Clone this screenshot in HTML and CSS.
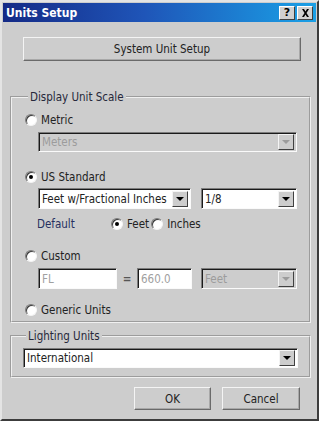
FILE: index.html
```html
<!DOCTYPE html>
<html lang="en">
<head>
    <meta charset="UTF-8">
    <title>Units Setup</title>
    <link rel="stylesheet" href="styles.css">
</head>
<body>
    <div class="window">
        <div class="titlebar">
            <span class="title">Units Setup</span>
            <div class="caption-buttons">
                <span class="cap-btn">?</span>
                <span class="cap-btn cap-close">
                    <svg width="9" height="8" viewBox="0 0 9 8"><path d="M1 0h2l1.5 2.5L6 0h2L5.5 4 8 8H6L4.5 5.5 3 8H1l2.5-4z" fill="#000"/></svg>
                </span>
            </div>
        </div>

        <div class="content">
            <button class="btn btn-wide">System Unit Setup</button>

            <fieldset class="group group-scale">
                <legend>Display Unit Scale</legend>

                <label class="row row-metric"><span class="radio"></span>Metric</label>
                <div class="combo combo-meters disabled"><span class="value">Meters</span><span class="arrow"></span></div>

                <label class="row row-us"><span class="radio checked"></span>US Standard</label>
                <div class="field-row field-row-us">
                    <div class="combo combo-feet"><span class="value">Feet w/Fractional Inches</span><span class="arrow"></span></div>
                    <div class="combo combo-frac"><span class="value">1/8</span><span class="arrow"></span></div>
                </div>
                <div class="row row-default">
                    <span class="default-label">Default</span>
                    <label class="opt opt-feet"><span class="radio checked"></span>Feet</label>
                    <label class="opt opt-inches"><span class="radio"></span>Inches</label>
                </div>

                <label class="row row-custom"><span class="radio"></span>Custom</label>
                <div class="field-row field-row-custom">
                    <div class="edit edit-fl">FL</div>
                    <span class="equals">=</span>
                    <div class="edit edit-num">660.0</div>
                    <div class="combo combo-unit disabled"><span class="value">Feet</span><span class="arrow"></span></div>
                </div>

                <label class="row row-generic"><span class="radio"></span>Generic Units</label>
            </fieldset>

            <fieldset class="group group-light">
                <legend>Lighting Units</legend>
                <div class="combo combo-light"><span class="value">International</span><span class="arrow"></span></div>
            </fieldset>

            <div class="actions">
                <button class="btn btn-ok">OK</button>
                <button class="btn btn-cancel">Cancel</button>
            </div>
        </div>
    </div>
</body>
</html>
```
FILE: styles.css
```css
body {
    margin: 0;
    background: #cdcdcd;
    font-family: "DejaVu Sans Condensed", "DejaVu Sans", sans-serif;
    font-size: 11.5px;
    color: #222;
}
.window {
    width: 319px;
    height: 421px;
    box-sizing: border-box;
    background: #cdcdcd;
    border: 2px solid;
    border-color: #e4e4e4 #3c3c3c #3c3c3c #e4e4e4;
    padding: 1px;
}
.titlebar {
    height: 19px;
    display: flex;
    align-items: center;
    justify-content: space-between;
    padding: 0 3px 0 3px;
    background: linear-gradient(to right, #142a86 0%, #1f55b8 45%, #1aa0e6 100%);
}
.title {
    color: #fff;
    font-weight: bold;
    font-size: 12px;
}
.caption-buttons {
    display: flex;
    gap: 2px;
}
.cap-btn {
    width: 16px;
    height: 14px;
    box-sizing: border-box;
    display: flex;
    align-items: center;
    justify-content: center;
    background: #d0d0d0;
    border: 1px solid;
    border-color: #fff #404040 #404040 #fff;
    font-family: "DejaVu Sans", sans-serif;
    font-weight: bold;
    font-size: 11px;
    color: #000;
}
.content {
    padding: 0 5px 0 7px;
}
.btn {
    display: block;
    box-sizing: border-box;
    background: #cdcdcd;
    border: 1px solid;
    border-color: #f4f4f4 #6a6a6a #6a6a6a #f4f4f4;
    box-shadow: inset -1px -1px #a8a8a8;
    font-family: inherit;
    font-size: 11.5px;
    color: #222;
    padding: 0;
}
.btn-wide {
    margin: 15px 10px 0 13px;
    width: 278px;
    height: 24px;
}
.group {
    margin: 0;
    border: 2px groove #f0f0f0;
    padding: 0 12px 0 13px;
}
.group legend {
    padding: 0 2px;
    margin-left: 3px;
    line-height: 14px;
    color: #26283a;
}
.group-scale {
    margin-top: 29px;
    height: 233px;
    box-sizing: border-box;
}
.row {
    display: flex;
    align-items: center;
    height: 16px;
}
.radio {
    width: 12px;
    height: 12px;
    box-sizing: border-box;
    border-radius: 50%;
    background: #fff;
    border: 1px solid;
    border-color: #7a7a7a #f4f4f4 #f4f4f4 #7a7a7a;
    box-shadow: inset 1px 1px #3a3a3a;
    margin-right: 4px;
    flex: none;
    position: relative;
}
.radio.checked::after {
    content: "";
    position: absolute;
    left: 3px;
    top: 3px;
    width: 4px;
    height: 4px;
    border-radius: 50%;
    background: #000;
}
.row-metric {
    margin-top: 8px;
}
.combo {
    display: flex;
    align-items: center;
    box-sizing: border-box;
    background: #fff;
    border: 1px solid;
    border-color: #7c7c7c #fafafa #fafafa #7c7c7c;
    box-shadow: inset 1px 1px #1a1a1a;
    padding: 0 2px 0 3px;
}
.combo .value {
    flex: 1;
    white-space: nowrap;
    overflow: hidden;
}
.combo .arrow {
    width: 16px;
    height: 16px;
    box-sizing: border-box;
    background: #cdcdcd;
    border: 1px solid;
    border-color: #f4f4f4 #404040 #404040 #f4f4f4;
    position: relative;
    flex: none;
}
.combo .arrow::after {
    content: "";
    position: absolute;
    left: 3px;
    top: 5px;
    border-left: 4px solid transparent;
    border-right: 4px solid transparent;
    border-top: 4px solid #000;
}
.combo.disabled {
    background: #cdcdcd;
    color: #9c9c9c;
}
.combo.disabled .arrow::after {
    border-top-color: #9c9c9c;
}
.combo-meters {
    margin: 4px 0 0 13px;
    height: 20px;
}
.row-us {
    margin-top: 17px;
}
.field-row {
    display: flex;
    align-items: center;
    margin-left: 13px;
}
.field-row-us {
    margin-top: 3px;
    gap: 10px;
}
.combo-feet {
    width: 153px;
    height: 21px;
}
.combo-frac {
    width: 96px;
    height: 21px;
}
.row-default {
    margin-top: 7px;
    padding-left: 12px;
}
.default-label {
    width: 74px;
    color: #263060;
}
.opt {
    display: flex;
    align-items: center;
}
.opt-inches {
    margin-left: 2px;
}
.row-custom {
    margin-top: 16px;
}
.field-row-custom {
    margin-top: 4px;
    height: 21px;
}
.edit {
    height: 21px;
    box-sizing: border-box;
    background: #fff;
    border: 1px solid;
    border-color: #7c7c7c #fafafa #fafafa #7c7c7c;
    box-shadow: inset 1px 1px #1a1a1a;
    padding: 3px 3px 0;
    color: #a0a0a0;
}
.edit-fl {
    width: 79px;
}
.equals {
    width: 20px;
    text-align: center;
    font-weight: bold;
    color: #555;
}
.edit-num {
    width: 55px;
}
.combo-unit {
    width: 96px;
    height: 21px;
    margin-left: 9px;
}
.row-generic {
    margin-top: 13px;
}
.group-light {
    margin-top: 6px;
    height: 49px;
    box-sizing: border-box;
    padding: 0 11px;
}
.combo-light {
    margin-top: 5px;
    height: 20px;
}
.actions {
    display: flex;
    justify-content: flex-end;
    gap: 11px;
    margin: 9px 11px 0 0;
}
.btn-ok {
    width: 77px;
    height: 23px;
}
.btn-cancel {
    width: 78px;
    height: 23px;
}
```
